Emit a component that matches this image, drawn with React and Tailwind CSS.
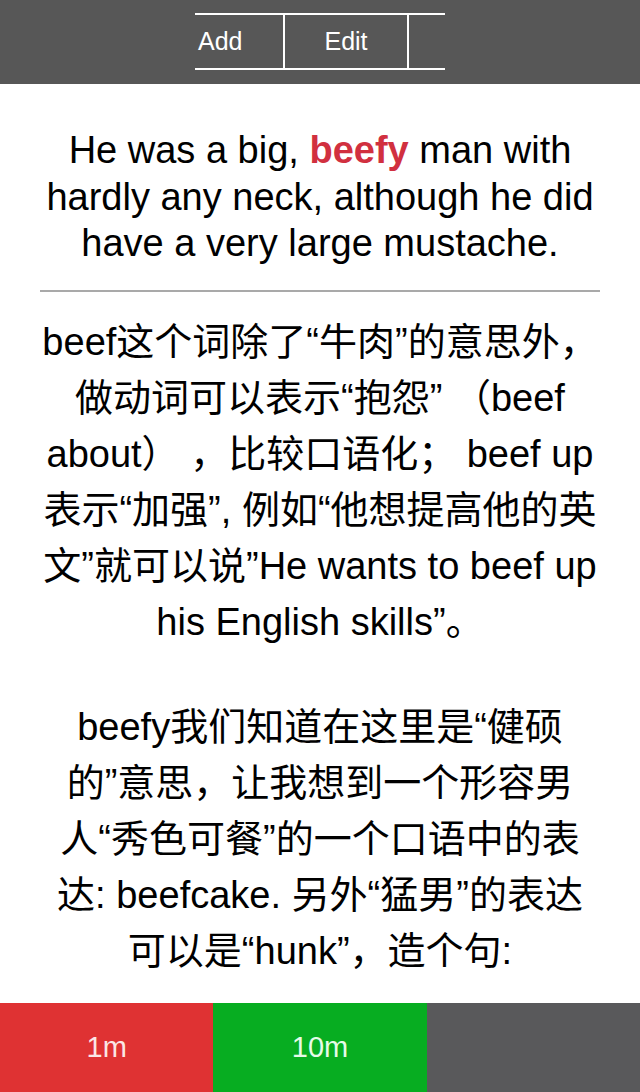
import React from "react";

const sentence = [
  ["He was a big, ", "beefy", " man with"],
  ["hardly any neck, although he did"],
  ["have a very large mustache."],
];

const notesA = [
  "beef这个词除了“牛肉”的意思外，",
  "做动词可以表示“抱怨” （beef",
  "about） ，比较口语化； beef up",
  "表示“加强”, 例如“他想提高他的英",
  "文”就可以说”He wants to beef up",
  "his English skills”。",
];

const notesB = [
  "beefy我们知道在这里是“健硕",
  "的”意思，让我想到一个形容男",
  "人“秀色可餐”的一个口语中的表",
  "达: beefcake. 另外“猛男”的表达",
  "可以是“hunk”，造个句:",
];

const TopBar = () => (
  <div className="h-[84px] bg-[#575757] flex items-start shrink-0">
    <div className="ml-[195px] mt-[13px] flex h-[57px] text-white text-[25px]">
      <div className="w-[88px] border-y-2 border-white flex items-center pl-[3px]">Add</div>
      <div className="w-[2px] bg-white" />
      <div className="w-[122px] border-y-2 border-white flex items-center justify-center">Edit</div>
      <div className="w-[2px] bg-white" />
      <div className="w-[36px] border-y-2 border-white" />
    </div>
  </div>
);

const BottomBar = () => (
  <div className="h-[89px] grid grid-cols-3 shrink-0 text-[29px]">
    <div className="bg-[#df3233] text-[#fbe6e6] flex items-center justify-center">1m</div>
    <div className="bg-[#07ad21] text-[#e6fbe8] flex items-center justify-center">10m</div>
    <div className="bg-[#59595b]" />
  </div>
);

export default function App() {
  return (
    <div
      className="h-[1092px] w-[640px] flex flex-col bg-white overflow-hidden"
      style={{ fontFamily: '"Liberation Sans", "Noto Sans CJK SC", sans-serif' }}
    >
      <TopBar />
      <div className="flex-1 overflow-hidden">
        <div className="pt-[43px] text-center text-[38px] leading-[46.5px] text-black">
          {sentence.map((line, i) => (
            <div key={i} className="whitespace-nowrap">
              {line.length > 1 ? (
                <>
                  {line[0]}
                  <span className="font-bold text-[#d1303f]">{line[1]}</span>
                  {line[2]}
                </>
              ) : (
                line[0]
              )}
            </div>
          ))}
        </div>
        <div className="mx-[40px] mt-[23px] h-[2px] bg-[#a9a9a9]" />
        <div className="pt-[22px] text-center text-[38px] leading-[56px] text-black">
          {notesA.map((line, i) => (
            <div key={i} className="whitespace-pre">{line}</div>
          ))}
          <div className="h-[49px]" />
          {notesB.map((line, i) => (
            <div key={i} className="whitespace-pre">{line}</div>
          ))}
        </div>
      </div>
      <BottomBar />
    </div>
  );
}
